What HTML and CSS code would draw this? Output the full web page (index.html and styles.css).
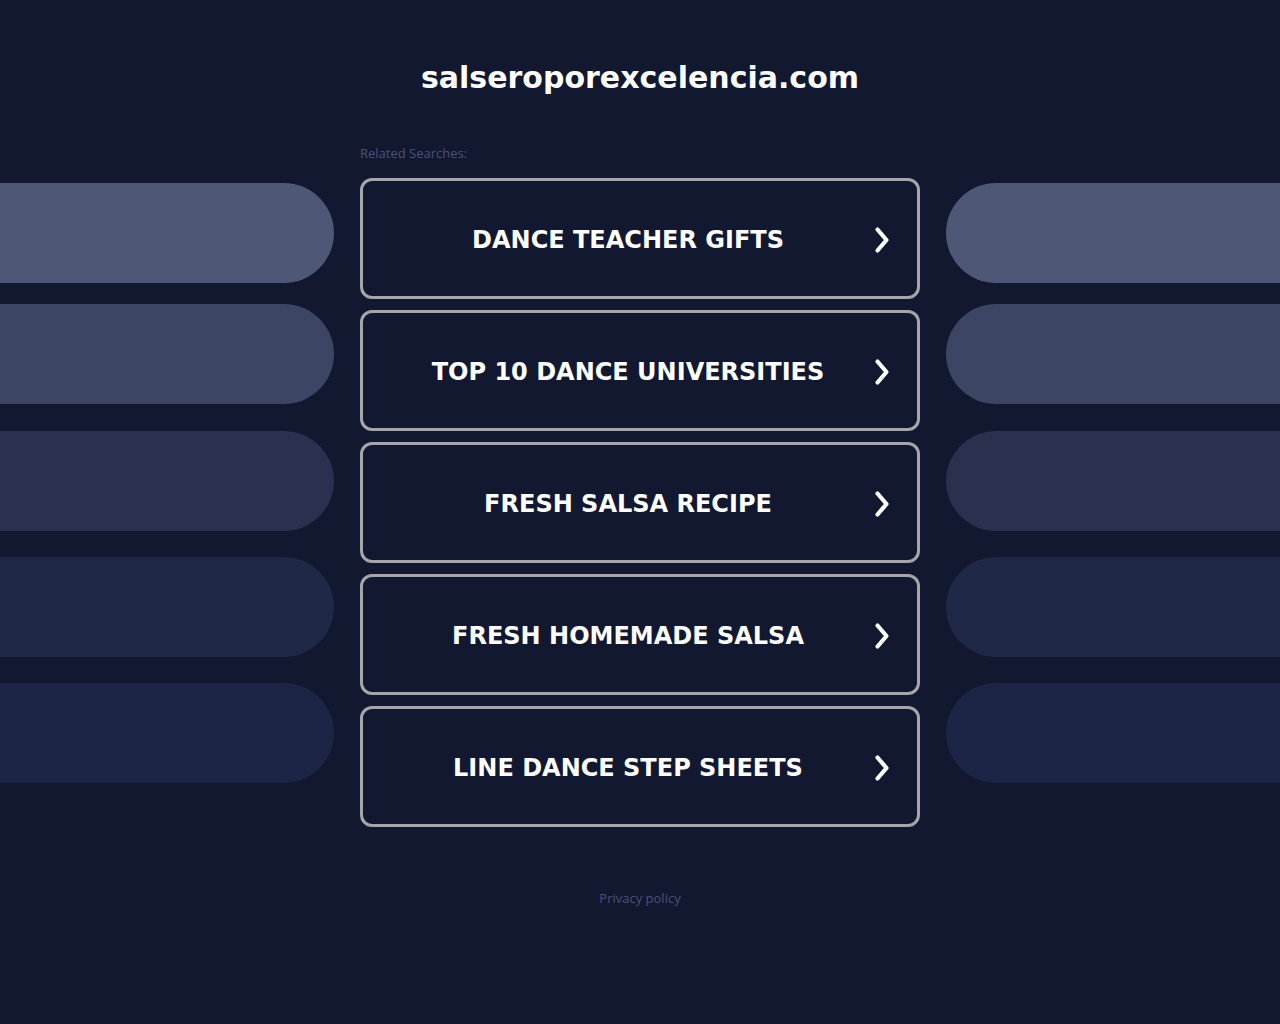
FILE: index.html
```html
<!DOCTYPE html>
<html lang="en">
<head>
<meta charset="utf-8">
<title>salseroporexcelencia.com</title>
<link rel="stylesheet" href="styles.css">
</head>
<body>
<h1 class="domain">salseroporexcelencia.com</h1>
<div class="layout">
  <div class="side">
    <div class="pill pill-1"></div>
    <div class="pill pill-2"></div>
    <div class="pill pill-3"></div>
    <div class="pill pill-4"></div>
    <div class="pill pill-5"></div>
  </div>
  <div class="center">
    <div class="related">Related Searches:</div>
    <div class="links">
      <a class="link" href="#"><span class="link-text">DANCE TEACHER GIFTS</span><svg class="chev" viewBox="0 0 16 28" width="16" height="28"><path d="M3.5 3.5 L12.5 14 L3.5 24.5" fill="none" stroke="#fff" stroke-width="4.2" stroke-linecap="round" stroke-linejoin="round"/></svg></a>
      <a class="link" href="#"><span class="link-text">TOP 10 DANCE UNIVERSITIES</span><svg class="chev" viewBox="0 0 16 28" width="16" height="28"><path d="M3.5 3.5 L12.5 14 L3.5 24.5" fill="none" stroke="#fff" stroke-width="4.2" stroke-linecap="round" stroke-linejoin="round"/></svg></a>
      <a class="link" href="#"><span class="link-text">FRESH SALSA RECIPE</span><svg class="chev" viewBox="0 0 16 28" width="16" height="28"><path d="M3.5 3.5 L12.5 14 L3.5 24.5" fill="none" stroke="#fff" stroke-width="4.2" stroke-linecap="round" stroke-linejoin="round"/></svg></a>
      <a class="link" href="#"><span class="link-text">FRESH HOMEMADE SALSA</span><svg class="chev" viewBox="0 0 16 28" width="16" height="28"><path d="M3.5 3.5 L12.5 14 L3.5 24.5" fill="none" stroke="#fff" stroke-width="4.2" stroke-linecap="round" stroke-linejoin="round"/></svg></a>
      <a class="link" href="#"><span class="link-text">LINE DANCE STEP SHEETS</span><svg class="chev" viewBox="0 0 16 28" width="16" height="28"><path d="M3.5 3.5 L12.5 14 L3.5 24.5" fill="none" stroke="#fff" stroke-width="4.2" stroke-linecap="round" stroke-linejoin="round"/></svg></a>
    </div>
  </div>
  <div class="side side-right">
    <div class="pill pill-1"></div>
    <div class="pill pill-2"></div>
    <div class="pill pill-3"></div>
    <div class="pill pill-4"></div>
    <div class="pill pill-5"></div>
  </div>
</div>
<div class="footer"><a class="privacy" href="#">Privacy policy</a></div>
</body>
</html>
```

FILE: styles.css
```css
html, body {
  margin: 0;
  padding: 0;
  background: #121830;
  min-height: 100%;
}
body {
  font-family: "DejaVu Sans", sans-serif;
  color: #fff;
}
.domain {
  margin: 0;
  padding-top: 60px;
  font-size: 30px;
  line-height: 36px;
  font-weight: bold;
  text-align: center;
  color: #fff;
}
.layout {
  margin-top: 48px;
  display: grid;
  grid-template-columns: 334px 560px 334px;
  column-gap: 26px;
  align-items: start;
}
.side {
  padding-top: 39px;
  display: flex;
  flex-direction: column;
  gap: 26px;
}
.pill {
  height: 100px;
  border-radius: 0 50px 50px 0;
}
.side-right .pill {
  border-radius: 50px 0 0 50px;
}
.pill-1 { background: #4e5775; margin-bottom: -5px; }
.pill-2 { background: #3c4563; margin-bottom: 1px; }
.pill-3 { background: #29314f; }
.pill-4 { background: #1f2847; }
.pill-5 { background: #1c2545; }
.related {
  font-family: "Open Sans", "Liberation Sans", sans-serif;
  font-size: 13px;
  line-height: 18px;
  color: #4b5375;
  margin-bottom: 16px;
}
.links {
  display: flex;
  flex-direction: column;
  gap: 11px;
}
.link {
  position: relative;
  box-sizing: border-box;
  height: 121px;
  border: 3px solid #a6a6aa;
  border-radius: 12px;
  display: flex;
  align-items: center;
  justify-content: center;
  padding: 2px 24px 0 0;
  text-decoration: none;
  color: #fff;
}
.link-text {
  font-size: 24px;
  font-weight: bold;
  letter-spacing: 0;
  white-space: nowrap;
}
.chev {
  position: absolute;
  right: 27px;
  top: 50%;
  transform: translateY(-50%);
  margin-top: 1px;
}
.footer {
  margin-top: 61px;
  text-align: center;
}
.privacy {
  font-family: "Open Sans", "Liberation Sans", sans-serif;
  font-size: 13px;
  line-height: 16px;
  color: #4b5375;
  text-decoration: none;
}
```
